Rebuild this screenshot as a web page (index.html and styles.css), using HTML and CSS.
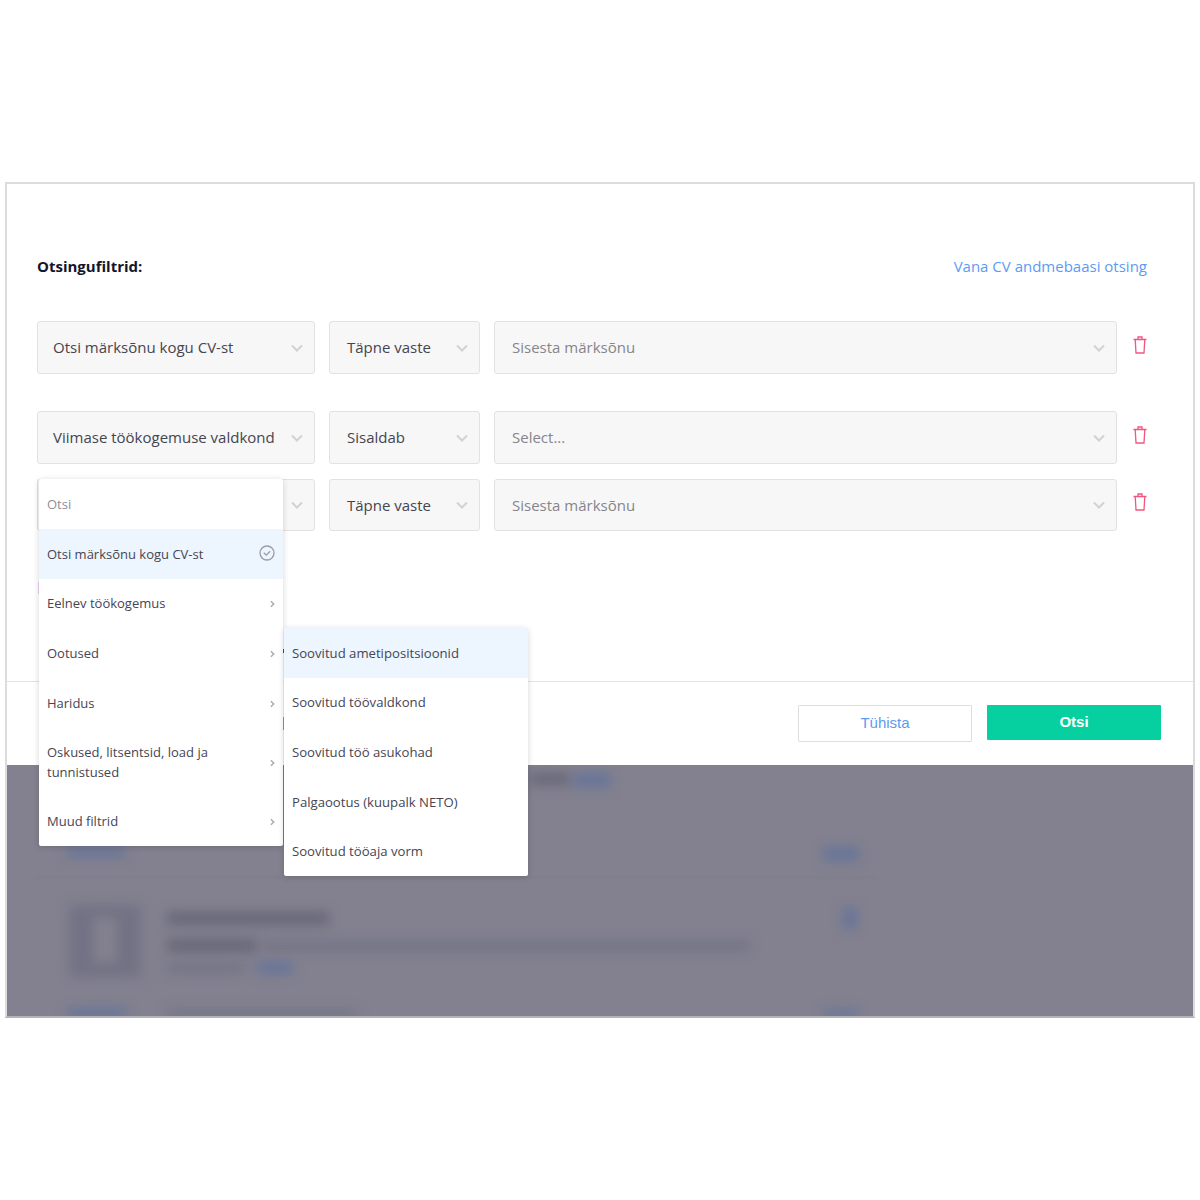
FILE: index.html
```html
<!DOCTYPE html>
<html lang="en">
<head>
  <meta charset="UTF-8" />
  <title>Otsingufiltrid</title>
  <link rel="stylesheet" href="styles.css">
</head>
<body>
  <svg class="icon-defs" width="0" height="0">
    <symbol id="chevron-down" viewBox="0 0 12 8"><path d="M1 1.500l5 5 5-5" fill="none" stroke="currentColor" stroke-width="2"/></symbol>
    <symbol id="chevron-right" viewBox="0 0 6 10"><path d="M1 1.500L4.500 5 1 8.500" fill="none" stroke="currentColor" stroke-width="1.800"/></symbol>
    <symbol id="trash" viewBox="0 0 14 18"><path d="M.5 3.500h13M5 3.500V1h4v2.500M2.200 3.500l.8 13.500h8l.8-13.500" fill="none" stroke="currentColor" stroke-width="1.300"/></symbol>
  </svg>

  <div class="frame">
    <div class="filters">
      <div class="filters-head">
        <strong class="filters-title">Otsingufiltrid:</strong>
        <a class="old-search" href="#">Vana CV andmebaasi otsing</a>
      </div>

      <div class="filter-row">
        <div class="select select-field">Otsi märksõnu kogu CV-st<svg class="caret"><use href="#chevron-down"/></svg></div>
        <div class="select select-match">Täpne vaste<svg class="caret"><use href="#chevron-down"/></svg></div>
        <div class="select select-value placeholder">Sisesta märksõnu<svg class="caret"><use href="#chevron-down"/></svg></div>
        <svg class="trash"><use href="#trash"/></svg>
      </div>

      <div class="filter-row row-second">
        <div class="select select-field">Viimase töökogemuse valdkond<svg class="caret"><use href="#chevron-down"/></svg></div>
        <div class="select select-match">Sisaldab<svg class="caret"><use href="#chevron-down"/></svg></div>
        <div class="select select-value placeholder">Select...<svg class="caret"><use href="#chevron-down"/></svg></div>
        <svg class="trash"><use href="#trash"/></svg>
      </div>

      <div class="filter-row row-third">
        <div class="select select-field"><svg class="caret"><use href="#chevron-down"/></svg></div>
        <div class="select select-match">Täpne vaste<svg class="caret"><use href="#chevron-down"/></svg></div>
        <div class="select select-value placeholder">Sisesta märksõnu<svg class="caret"><use href="#chevron-down"/></svg></div>
        <svg class="trash"><use href="#trash"/></svg>
      </div>
    </div>

    <div class="actions">
      <button class="btn btn-cancel">Tühista</button>
      <button class="btn btn-search">Otsi</button>
    </div>

    <div class="results">
      <span class="blur dark" style="left:523px;top:8px;width:40px;height:12px"></span>
      <span class="blur blue" style="left:566px;top:8px;width:38px;height:14px"></span>
      <span class="blur blue" style="left:60px;top:82px;width:58px;height:10px"></span>
      <span class="blur blue" style="left:816px;top:82px;width:36px;height:14px"></span>
      <span class="blur faint-line" style="left:30px;top:112px;width:840px;height:1px"></span>
      <span class="blur thumb" style="left:62px;top:140px;width:72px;height:72px"></span>
      <span class="blur thumb-hole" style="left:86px;top:152px;width:24px;height:46px"></span>
      <span class="blur dark" style="left:160px;top:147px;width:162px;height:13px"></span>
      <span class="blur blue" style="left:836px;top:142px;width:14px;height:22px"></span>
      <span class="blur dark" style="left:160px;top:174px;width:90px;height:13px"></span>
      <span class="blur mid" style="left:255px;top:176px;width:488px;height:10px"></span>
      <span class="blur mid" style="left:160px;top:198px;width:78px;height:10px"></span>
      <span class="blur blue" style="left:250px;top:197px;width:36px;height:12px"></span>
      <span class="blur blue" style="left:60px;top:243px;width:60px;height:10px"></span>
      <span class="blur mid" style="left:160px;top:245px;width:190px;height:8px"></span>
      <span class="blur blue" style="left:816px;top:245px;width:36px;height:8px"></span>
    </div>

    <span class="stray stray-pink"></span>
    <span class="stray stray-dark"></span>
    <span class="stray stray-blue"></span>

    <div class="menu field-menu">
      <div class="menu-search">Otsi</div>
      <div class="menu-item active">Otsi märksõnu kogu CV-st
        <svg class="check" viewBox="0 0 16 16"><circle cx="8" cy="8" r="7" fill="none" stroke="currentColor" stroke-width="1.300"/><path d="M4.800 7.800l2.400 2.400 4-4" fill="none" stroke="currentColor" stroke-width="1.300"/></svg>
      </div>
      <div class="menu-item">Eelnev töökogemus<svg class="arrow"><use href="#chevron-right"/></svg></div>
      <div class="menu-item">Ootused<svg class="arrow"><use href="#chevron-right"/></svg></div>
      <div class="menu-item">Haridus<svg class="arrow"><use href="#chevron-right"/></svg></div>
      <div class="menu-item tall"><span>Oskused, litsentsid, load ja tunnistused</span><svg class="arrow"><use href="#chevron-right"/></svg></div>
      <div class="menu-item">Muud filtrid<svg class="arrow"><use href="#chevron-right"/></svg></div>
    </div>

    <div class="menu sub-menu">
      <div class="menu-item active">Soovitud ametipositsioonid</div>
      <div class="menu-item">Soovitud töövaldkond</div>
      <div class="menu-item">Soovitud töö asukohad</div>
      <div class="menu-item">Palgaootus (kuupalk NETO)</div>
      <div class="menu-item">Soovitud tööaja vorm</div>
    </div>
  </div>
</body>
</html>
```

FILE: styles.css
```css
body {
  font-family: "Open Sans", "Liberation Sans", sans-serif;
  background-color: white;
  margin: 0;
  padding: 182px 5px 0;
  color: #3d3d4e;
}

.icon-defs {
  position: absolute;
}

.frame {
  position: relative;
  border: 2px solid #dcdcdc;
  border-bottom-color: #b4b4b8;
  height: 832px;
  overflow: hidden;
  background-color: white;
}

.filters {
  height: 498px;
  padding: 71px 46px 0 30px;
  border-bottom: 1px solid #e4e4e4;
  box-sizing: border-box;
}

.filters-head {
  display: flex;
  justify-content: space-between;
  align-items: center;
  height: 22px;
  margin-bottom: 44px;
}

.filters-title {
  font-size: 15px;
  font-weight: 700;
  color: #14142b;
}

.old-search {
  font-size: 15px;
  color: #5c9bf5;
  text-decoration: none;
}

.filter-row {
  display: flex;
  align-items: center;
  gap: 14px;
  height: 53px;
}

.row-second {
  margin-top: 37px;
}

.row-third {
  margin-top: 15px;
  height: 52px;
}

.select {
  position: relative;
  height: 100%;
  box-sizing: border-box;
  display: flex;
  align-items: center;
  background-color: #f7f7f7;
  border: 1px solid #e2e2e2;
  border-radius: 3px;
  padding: 0 0 1px 17px;
  font-size: 15px;
  color: #45454f;
}

.select-field {
  width: 278px;
  padding-left: 15px;
}

.select-match {
  width: 151px;
}

.select-value {
  width: 623px;
}

.placeholder {
  color: #85858c;
}

.caret {
  position: absolute;
  right: 11px;
  top: 50%;
  margin-top: -4px;
  width: 12px;
  height: 8px;
  color: #d2d2d2;
}

.trash {
  width: 14px;
  height: 18px;
  margin: -6px 0 0 2px;
  color: #f2557f;
}

.actions {
  display: flex;
  justify-content: flex-end;
  align-items: flex-start;
  gap: 15px;
  height: 83px;
  box-sizing: border-box;
  padding: 23px 32px 0 0;
}

.btn {
  width: 174px;
  font-family: "Liberation Sans", sans-serif;
  font-size: 15px;
  border-radius: 1px;
  padding: 0 0 2px;
}

.btn-cancel {
  height: 37px;
  background-color: white;
  border: 1px solid #dedede;
  color: #5c9bf5;
}

.btn-search {
  height: 35px;
  background-color: #06d09f;
  border: none;
  color: white;
  font-weight: 700;
}

.results {
  position: relative;
  height: 251px;
  background-color: #83818f;
  overflow: hidden;
}

.blur {
  position: absolute;
  filter: blur(6px);
}

.blur.dark {
  background-color: #686778;
}

.blur.mid {
  background-color: #737386;
}

.blur.blue {
  background-color: #667499;
}

.blur.faint-line {
  background-color: #7c7b89;
  filter: blur(1px);
}

.blur.thumb {
  background-color: #727285;
}

.blur.thumb-hole {
  background-color: #83818f;
  filter: blur(6px);
}

.stray {
  position: absolute;
}

.stray-pink {
  left: 31px;
  top: 398px;
  width: 1px;
  height: 12px;
  background-color: #eccdf2;
}

.stray-dark {
  left: 276px;
  top: 465px;
  width: 2px;
  height: 4px;
  background-color: #55506a;
}

.stray-blue {
  left: 276px;
  top: 533px;
  width: 1px;
  height: 13px;
  background-color: #6aa7e8;
}

.menu {
  position: absolute;
  width: 244px;
  background-color: white;
  box-shadow: 0 1px 6px rgba(0, 0, 0, 0.16);
  border-radius: 2px;
  font-size: 13px;
  color: #454554;
}

.field-menu {
  left: 32px;
  top: 295px;
}

.sub-menu {
  left: 277px;
  top: 444px;
  height: 248px;
  font-size: 13.150px;
}

.menu-search {
  height: 50px;
  display: flex;
  align-items: center;
  padding-left: 8px;
  color: #8e8e98;
}

.menu-item {
  position: relative;
  display: flex;
  align-items: center;
  height: 49.600px;
  padding-left: 8px;
  box-sizing: border-box;
  line-height: 20px;
}

.menu-item.tall {
  height: 69px;
}

.menu-item.tall span {
  width: 200px;
}

.menu-item.active {
  background-color: #edf5fe;
}

.arrow {
  position: absolute;
  right: 8px;
  top: 50%;
  margin-top: -3px;
  width: 5px;
  height: 8px;
  color: #a9a9b0;
}

.check {
  position: absolute;
  right: 8px;
  top: 50%;
  margin-top: -9px;
  width: 16px;
  height: 16px;
  color: #9c9ca6;
}
```
